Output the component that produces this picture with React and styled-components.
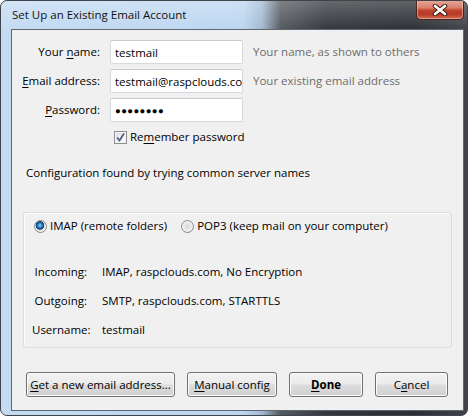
import React from 'react';
import styled, { createGlobalStyle } from 'styled-components';

const GlobalStyle = createGlobalStyle`
  html, body {
    margin: 0;
    padding: 0;
    background: #ffffff;
  }
  body {
    font-family: "Open Sans", "Noto Sans", sans-serif;
    font-size: 11.5px;
    color: #000000;
  }
`;

export default function App() {
  return (
    <>
      <GlobalStyle />
      <Window>
        <TitleBar>
          <Title>Set Up an Existing Email Account</Title>
          <CloseButton aria-label="Close">
            <svg width="16" height="12" viewBox="0 0 16 12">
              <path d="M3 2 L13 10 M13 2 L3 10" stroke="#3b1a14" strokeWidth="4.5" strokeLinecap="round" />
              <path d="M3 2 L13 10 M13 2 L3 10" stroke="#ffffff" strokeWidth="2.6" strokeLinecap="round" />
            </svg>
          </CloseButton>
        </TitleBar>

        <Client>
          <Form>
            <Label>Your <Key>n</Key>ame:</Label>
            <TextBox>testmail</TextBox>
            <Hint>Your name, as shown to others</Hint>

            <Label><Key>E</Key>mail address:</Label>
            <TextBox>testmail@raspclouds.com</TextBox>
            <Hint>Your existing email address</Hint>

            <Label><Key>P</Key>assword:</Label>
            <TextBox $secret>●●●●●●●●</TextBox>
            <span />

            <CheckRow>
              <CheckBox>
                <svg width="11" height="11" viewBox="0 0 11 11">
                  <path d="M2 5.5 L4.5 8.5 L9 1.5" fill="none" stroke="#4c5f8a" strokeWidth="1.8" />
                </svg>
              </CheckBox>
              <span>Re<Key>m</Key>ember password</span>
            </CheckRow>
          </Form>

          <Status>Configuration found by trying common server names</Status>

          <GroupBox>
            <RadioRow>
              <RadioOption>
                <Radio $checked />
                <span>IMAP (remote folders)</span>
              </RadioOption>
              <RadioOption>
                <Radio />
                <span>POP3 (keep mail on your computer)</span>
              </RadioOption>
            </RadioRow>

            <Details>
              <DetailLabel>Incoming:</DetailLabel>
              <span>IMAP, raspclouds.com, No Encryption</span>
              <DetailLabel>Outgoing:</DetailLabel>
              <span>SMTP, raspclouds.com, STARTTLS</span>
              <DetailLabel>Username:</DetailLabel>
              <span>testmail</span>
            </Details>
          </GroupBox>

          <ButtonBar>
            <Button $width={149}><Key>G</Key>et a new email address...</Button>
            <Button $width={90}><Key>M</Key>anual config</Button>
            <Button $width={74} $default><Key>D</Key>one</Button>
            <Button $width={73}>C<Key>a</Key>ncel</Button>
          </ButtonBar>
        </Client>
      </Window>
    </>
  );
}

const Window = styled.div`
  box-sizing: border-box;
  width: 468px;
  height: 416px;
  display: flex;
  flex-direction: column;
  border: 1px solid #3e444b;
  border-radius: 7px;
  overflow: hidden;
  background:
    linear-gradient(180deg, rgba(255, 255, 255, 0.25) 0, rgba(255, 255, 255, 0) 30px),
    linear-gradient(90deg, #c4dbf2 0%, #bcd6f1 52%, #a3b9d0 56%, #53595f 60%, #33363b 70%, #2b2e33 88%, #3f4349 100%);
`;

const TitleBar = styled.div`
  height: 28px;
  display: flex;
  align-items: flex-start;
  justify-content: space-between;
`;

const Title = styled.div`
  padding: 6px 0 0 11px;
  font-size: 11.5px;
  line-height: 15px;
  color: #111111;
`;

const CloseButton = styled.div`
  box-sizing: border-box;
  width: 48px;
  height: 20px;
  margin-right: 3px;
  margin-top: -1px;
  display: flex;
  align-items: center;
  justify-content: center;
  border: 1px solid #4a2520;
  border-top: none;
  border-radius: 0 0 5px 5px;
  background: linear-gradient(180deg, #e8a99a 0%, #d9806c 40%, #c2432c 55%, #b73a24 75%, #d46d52 100%);
  box-shadow: inset 0 0 0 1px rgba(255, 220, 210, 0.45);
`;

const Client = styled.div`
  flex: 1;
  display: flex;
  flex-direction: column;
  margin: 0 3px 4px 10px;
  border: 1px solid #5d6873;
  background: #f0f0f0;
`;

const Form = styled.div`
  display: grid;
  grid-template-columns: 88px 133px auto;
  grid-auto-rows: 24px;
  column-gap: 10px;
  row-gap: 5px;
  align-items: center;
  padding-top: 10px;
`;

const Label = styled.span`
  text-align: right;
  line-height: 16px;
`;

const Key = styled.span`
  text-decoration: underline;
  text-underline-offset: 2px;
`;

const TextBox = styled.div`
  box-sizing: border-box;
  height: 24px;
  padding: 0 4px;
  display: flex;
  align-items: center;
  overflow: hidden;
  white-space: nowrap;
  background: #ffffff;
  border: 1px solid #d6d9de;
  border-top-color: #c6cad0;
  border-radius: 2px;
  font-size: ${({ $secret }) => ($secret ? '9.5px' : '11.5px')};
  letter-spacing: ${({ $secret }) => ($secret ? '0.4px' : '0')};
`;

const Hint = styled.span`
  color: #6d6d6d;
  line-height: 16px;
`;

const CheckRow = styled.label`
  grid-column: 2 / 4;
  align-self: start;
  display: flex;
  align-items: center;
  gap: 3px;
  height: 16px;
  padding-left: 4px;
  margin-top: 2px;
  line-height: 16px;
`;

const CheckBox = styled.span`
  box-sizing: border-box;
  width: 13px;
  height: 13px;
  display: flex;
  align-items: center;
  justify-content: center;
  border: 1px solid #8e8f8f;
  background: linear-gradient(135deg, #dcdcdc 0%, #f2f2f2 60%, #ffffff 100%);
  box-shadow: inset 0 0 0 1px #f4f4f4;
`;

const Status = styled.div`
  margin-top: 14px;
  padding-left: 14px;
  line-height: 16px;
`;

const GroupBox = styled.div`
  margin: 31px 11px 0;
  padding: 5px 10px 9px;
  border: 1px solid #d5dfe5;
  border-radius: 3px;
  box-shadow: inset 1px 1px 0 #ffffff;
`;

const RadioRow = styled.div`
  display: flex;
  gap: 14px;
  line-height: 16px;
`;

const RadioOption = styled.label`
  display: flex;
  align-items: center;
  gap: 3px;
`;

const Radio = styled.span`
  box-sizing: border-box;
  width: 13px;
  height: 13px;
  border-radius: 50%;
  border: 1px solid #8a8a8a;
  background: ${({ $checked }) =>
    $checked
      ? 'radial-gradient(circle at 45% 40%, #9ee0fb 0, #3a9ad8 1.5px, #0d4d8c 3.5px, #1a3e66 4px, #e6e6e6 4.6px, #f6f6f6 100%)'
      : 'radial-gradient(circle at 50% 50%, #d8d8d8 0, #e8e8e8 3px, #f8f8f8 100%)'};
`;

const Details = styled.div`
  display: grid;
  grid-template-columns: 55px auto;
  column-gap: 15px;
  row-gap: 13px;
  margin: 30px 0 0 -2px;
  line-height: 16px;
`;

const DetailLabel = styled.span`
  text-align: right;
  white-space: nowrap;
`;

const ButtonBar = styled.div`
  display: flex;
  gap: 12px;
  margin-top: auto;
  padding: 0 0 13px 14px;
`;

const Button = styled.button`
  box-sizing: border-box;
  width: ${({ $width }) => $width}px;
  height: 25px;
  padding: 0;
  font-family: inherit;
  font-size: 11.5px;
  font-weight: ${({ $default }) => ($default ? 700 : 400)};
  color: #000000;
  border: 1px solid #707070;
  border-radius: 3px;
  background: linear-gradient(180deg, #f2f2f2 0%, #ebebeb 48%, #dddddd 52%, #cfcfcf 100%);
  box-shadow: inset 0 0 0 1px #fcfcfc;
`;
